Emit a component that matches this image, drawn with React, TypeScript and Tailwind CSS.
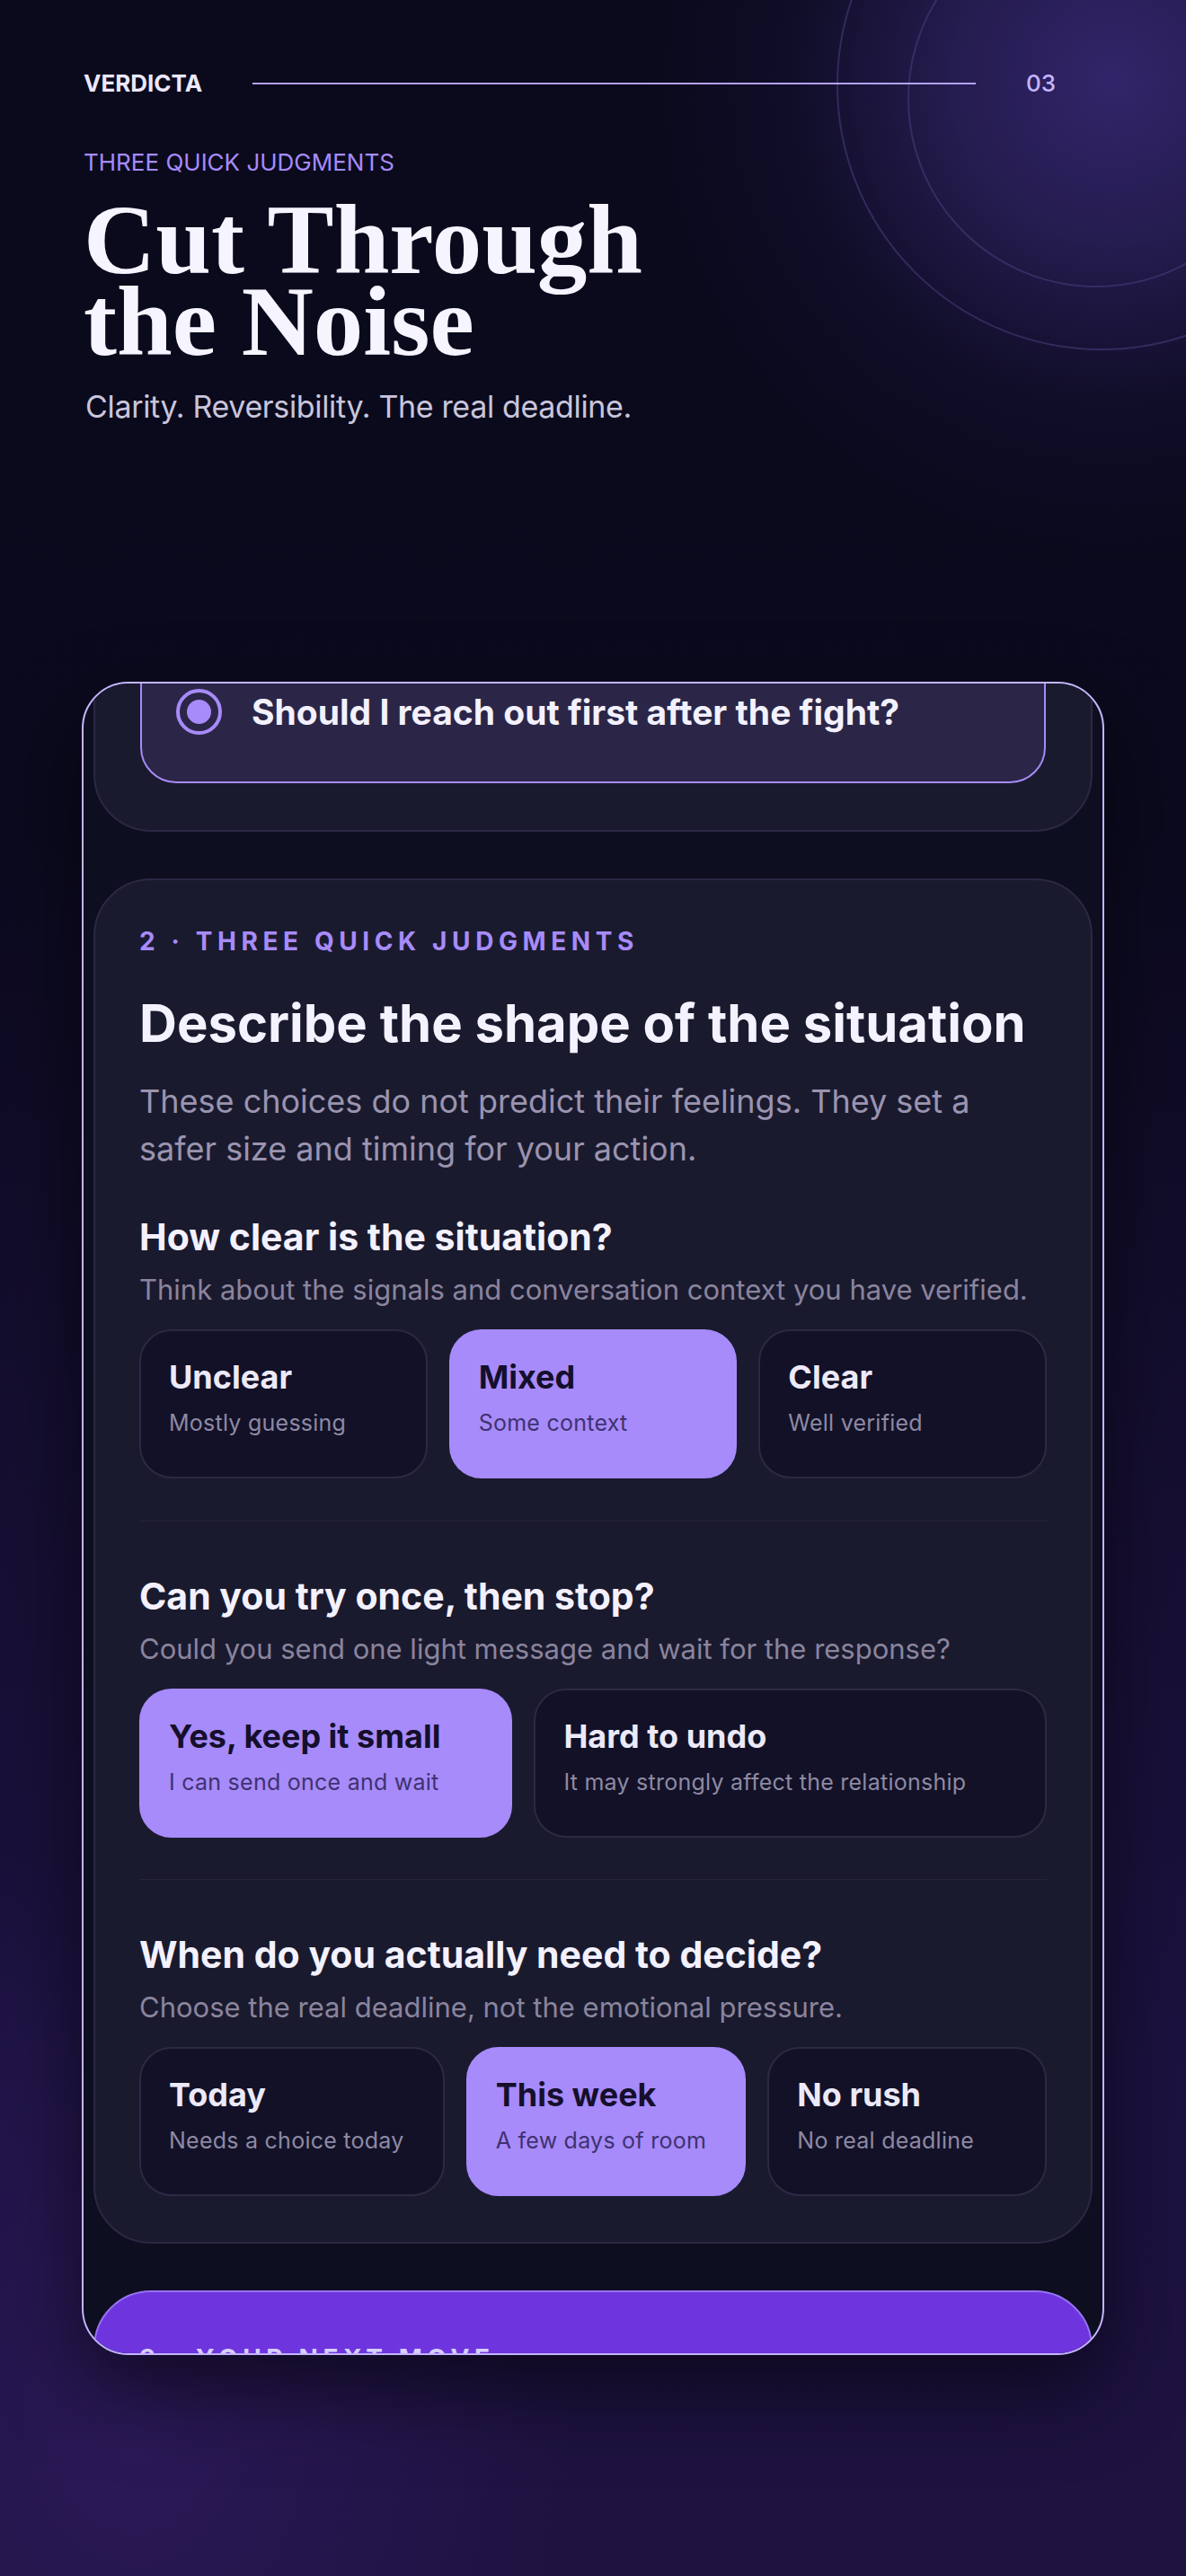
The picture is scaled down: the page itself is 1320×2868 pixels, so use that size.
import React from "react";

type Opt = { title: string; sub: string; on?: boolean };

const Option = ({ title, sub, on }: Opt) => (
  <div
    className={
      on
        ? "rounded-[36px] border-2 border-[#a78bfa] bg-[#a78bfa] px-[31px] pt-[29px] pb-[43px]"
        : "rounded-[36px] border-2 border-[#2c2944] bg-[#121127] px-[31px] pt-[29px] pb-[43px]"
    }
  >
    <div
      className={`whitespace-nowrap text-[36px] font-bold leading-[44px] ${
        on ? "text-[#150f2c]" : "text-[#ece9f8]"
      }`}
    >
      {title}
    </div>
    <div
      className={`mt-[12px] whitespace-nowrap text-[25px] leading-[34px] tracking-[0.01em] ${
        on ? "text-[#3f3270]" : "text-[#8e89a4]"
      }`}
    >
      {sub}
    </div>
  </div>
);

const Question = ({
  q,
  hint,
  cols,
  opts,
}: {
  q: string;
  hint: string;
  cols: string;
  opts: Opt[];
}) => (
  <div>
    <h3 className="text-[41px] font-bold leading-[48px] text-[#f3f1fe]">{q}</h3>
    <p className="mt-[15px] text-[31px] leading-[40px] text-[#8a849e]">{hint}</p>
    <div className={`mt-[24px] grid gap-[24px] ${cols}`}>
      {opts.map((o) => (
        <Option key={o.title} {...o} />
      ))}
    </div>
  </div>
);

const App = () => {
  return (
    <div className="relative h-[2868px] overflow-hidden bg-[radial-gradient(ellipse_700px_900px_at_150px_2700px,rgba(52,30,105,0.55),transparent_70%),linear-gradient(180deg,#0a0a1c_0%,#0b0a1e_32%,#150e30_55%,#1c1240_80%,#1e1240_100%)] font-['Inter',sans-serif]">
      {/* top-right glow and rings */}
      <div className="pointer-events-none absolute inset-0 bg-[radial-gradient(circle_at_1240px_90px,rgba(52,38,110,0.95)_0px,rgba(46,34,96,0.75)_180px,rgba(24,18,56,0.4)_360px,transparent_520px)]" />
      <div className="pointer-events-none absolute left-[931px] top-[-200px] h-[590px] w-[590px] rounded-full border-2 border-[rgba(150,130,230,0.22)]" />
      <div className="pointer-events-none absolute left-[1010px] top-[-100px] h-[420px] w-[420px] rounded-full border-2 border-[rgba(150,130,230,0.2)]" />

      <div className="relative">
        {/* Header */}
        <header className="flex items-center gap-[56px] pl-[93px] pr-[145px] pt-[77px]">
          <span className="text-[26px] font-bold leading-[32px] text-[#ece8ff]">VERDICTA</span>
          <div className="h-[2px] flex-1 bg-[#b3a2f7]" />
          <span className="text-[26px] font-medium leading-[32px] text-[#c4b5fd]">03</span>
        </header>

        {/* Hero */}
        <section className="pl-[93px]">
          <p className="mt-[56px] text-[26px] leading-[32px] text-[#a78bfa]">THREE QUICK JUDGMENTS</p>
          <h1 className="mt-[24px] font-['Liberation_Serif',serif] text-[111px] font-bold leading-[91px] text-[#f6f4ff]">
            Cut Through
            <br />
            the Noise
          </h1>
          <p className="mt-[28px] pl-[2px] text-[34px] leading-[44px] tracking-[-0.01em] text-[#c9c5dc]">
            Clarity. Reversibility. The real deadline.
          </p>
        </section>

        {/* Phone frame */}
        <div className="mx-[91px] mt-[284px] h-[1863px] overflow-hidden rounded-[52px] border-2 border-[#c4b5fd] bg-[#0d0e20] px-[11px] shadow-[0_40px_90px_rgba(0,0,0,0.55)]">
          {/* Step 1 (scrolled up) */}
          <div className="-mt-[98px] rounded-[64px] border-2 border-[#2b2843] bg-[#1a1a2e] px-[50px] pt-[50px] pb-[52px]">
            <div className="flex h-[157px] items-start gap-[33px] rounded-[40px] border-2 border-[#a78bfa] bg-[#2b2647] pl-[38px] pt-[50px]">
              <div className="flex h-[51px] w-[51px] shrink-0 items-center justify-center rounded-full border-[4px] border-[#a78bfa]">
                <div className="h-[27px] w-[27px] rounded-full bg-[#a78bfa]" />
              </div>
              <span className="whitespace-nowrap text-[39px] font-bold leading-[51px] text-[#f3f1fe]">
                Should I reach out first after the fight?
              </span>
            </div>
          </div>

          {/* Step 2 */}
          <div className="mt-[52px] rounded-[64px] border-2 border-[#2b2843] bg-[#1a1a2e] px-[49px] pt-[52px] pb-[51px]">
            <p className="text-[28px] font-bold leading-[32px] tracking-[0.2em] text-[#a78bfa]">2 · THREE QUICK JUDGMENTS</p>
            <h2 className="mt-[43px] text-[58px] font-bold leading-[64px] text-[#f4f2ff]">
              Describe the shape of the situation
            </h2>
            <p className="mt-[29px] text-[36px] leading-[53px] text-[#9a94b0]">
              These choices do not predict their feelings. They set a
              <br />
              safer size and timing for your action.
            </p>

            <div className="mt-[47px]">
              <Question
                q="How clear is the situation?"
                hint="Think about the signals and conversation context you have verified."
                cols="grid-cols-3"
                opts={[
                  { title: "Unclear", sub: "Mostly guessing" },
                  { title: "Mixed", sub: "Some context", on: true },
                  { title: "Clear", sub: "Well verified" },
                ]}
              />
            </div>

            <div className="mt-[47px] h-px bg-[#272439]" />

            <div className="mt-[59px]">
              <Question
                q="Can you try once, then stop?"
                hint="Could you send one light message and wait for the response?"
                cols="grid-cols-[415fr_570fr]"
                opts={[
                  { title: "Yes, keep it small", sub: "I can send once and wait", on: true },
                  { title: "Hard to undo", sub: "It may strongly affect the relationship" },
                ]}
              />
            </div>

            <div className="mt-[46px] h-px bg-[#272439]" />

            <div className="mt-[59px]">
              <Question
                q="When do you actually need to decide?"
                hint="Choose the real deadline, not the emotional pressure."
                cols="grid-cols-[339fr_311fr_310fr]"
                opts={[
                  { title: "Today", sub: "Needs a choice today" },
                  { title: "This week", sub: "A few days of room", on: true },
                  { title: "No rush", sub: "No real deadline" },
                ]}
              />
            </div>
          </div>

          {/* Step 3 (cut off) */}
          <div className="mt-[52px] h-[400px] rounded-[64px] border-2 border-[#9672f2] bg-[#6e35de] px-[49px] pt-[58px]">
            <p className="text-[28px] font-bold leading-[32px] tracking-[0.2em] text-[#d9cffd]">3 · YOUR NEXT MOVE</p>
          </div>
        </div>
      </div>
    </div>
  );
};

export default App;
